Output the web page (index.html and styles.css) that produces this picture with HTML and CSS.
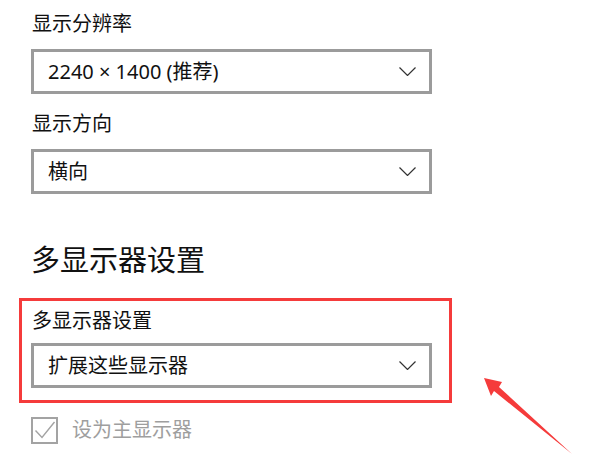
FILE: index.html
```html
<!DOCTYPE html>
<html lang="zh-CN">
<head>
<meta charset="utf-8">
<title>多显示器设置</title>
<link rel="stylesheet" href="styles.css">
</head>
<body>
<div class="page">
  <div class="group">
    <div class="label">显示分辨率</div>
    <div class="select">
      <span class="value">2240 × 1400 (推荐)</span>
      <svg class="chev" width="17" height="9" viewBox="0 0 17 9"><polyline points="0.5,0.5 8.5,8.5 16.5,0.5" fill="none" stroke="#333" stroke-width="1.2"/></svg>
    </div>
  </div>
  <div class="group second">
    <div class="label">显示方向</div>
    <div class="select">
      <span class="value">横向</span>
      <svg class="chev" width="17" height="9" viewBox="0 0 17 9"><polyline points="0.5,0.5 8.5,8.5 16.5,0.5" fill="none" stroke="#333" stroke-width="1.2"/></svg>
    </div>
  </div>
  <h2 class="heading">多显示器设置</h2>
  <div class="highlight">
    <div class="label">多显示器设置</div>
    <div class="select">
      <span class="value">扩展这些显示器</span>
      <svg class="chev" width="17" height="9" viewBox="0 0 17 9"><polyline points="0.5,0.5 8.5,8.5 16.5,0.5" fill="none" stroke="#333" stroke-width="1.2"/></svg>
    </div>
  </div>
  <div class="check">
    <span class="box">
      <svg width="23" height="23" viewBox="0 0 23 23"><polyline points="2.5,11.5 9,18.5 21.5,3" fill="none" stroke="#a3a3a3" stroke-width="1.4"/></svg>
    </span>
    <span class="check-text">设为主显示器</span>
  </div>
  <svg class="arrow" width="600" height="472" viewBox="0 0 600 472">
    <polygon points="484,378 502,382 499,387 572,454 494,391 491,396" fill="#f53b3b"/>
  </svg>
</div>
</body>
</html>
```

FILE: styles.css
```css
* { box-sizing: border-box; }
html, body { margin: 0; padding: 0; background: #fff; }
body {
  font-family: "Noto Sans", "Noto Sans CJK SC", sans-serif;
  color: #111;
}
.page {
  position: relative;
  width: 600px;
  height: 472px;
  padding: 10px 0 0 31px;
  overflow: hidden;
}
.label {
  font-size: 20px;
  line-height: 28px;
  margin-bottom: 11px;
  padding-left: 1px;
}
.second { margin-top: 16px; }
.select {
  width: 401px;
  height: 45px;
  border: 3px solid #9b9b9b;
  display: flex;
  align-items: center;
  justify-content: space-between;
  padding: 0 13px 0 14px;
  font-size: 20px;
  background: #fff;
}
.value { line-height: 28px; }
.chev { display: block; }
.heading {
  margin: 47px 0 19px 0;
  font-size: 29px;
  line-height: 38px;
  font-weight: normal;
}
.highlight {
  width: 433px;
  margin-left: -12px;
  border: 3px solid #f53b3b;
  padding: 6px 17px 12px 9px;
}
.highlight .label { margin-bottom: 8px; }
.check {
  margin-top: 13px;
  display: flex;
  align-items: center;
  gap: 14px;
}
.box {
  width: 27px;
  height: 27px;
  border: 2px solid #a3a3a3;
  display: flex;
  align-items: center;
  justify-content: center;
}
.box svg { display: block; }
.check-text {
  font-size: 20px;
  line-height: 28px;
  color: #9e9e9e;
}
.arrow {
  position: absolute;
  left: 0;
  top: 0;
  pointer-events: none;
}
```
